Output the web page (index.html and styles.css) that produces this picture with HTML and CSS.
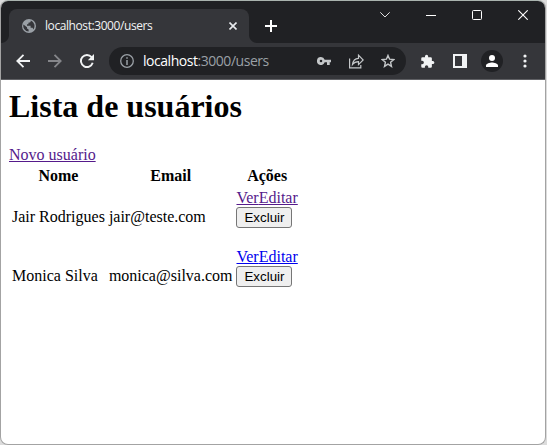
FILE: index.html
```html
<!DOCTYPE html>
<html lang="pt-BR">
<head>
<meta charset="utf-8">
<title>localhost:3000/users</title>
<link rel="stylesheet" href="styles.css">
</head>
<body>
<div class="window">
  <header class="tabstrip">
    <div class="tab">
      <svg class="globe" width="14" height="14" viewBox="0 0 14 14"><circle cx="7" cy="7" r="7" fill="#9aa0a6"/><path d="M1.4 5.6 5 8.2v1.2l1.6 1.2v2A5.8 5.8 0 0 1 1.4 5.6zM8.8 1.6c0 1.6-.6 2-2.4 2.2v1.5H5v1.5h3.6v2h2l.8 1.6A5.8 5.8 0 0 0 8.800 1.600z" fill="#35363a"/></svg>
      <span class="tab-title">localhost:3000/users</span>
      <svg class="tab-close" width="8" height="8" viewBox="0 0 8 8"><path d="M.5.5l7 7M7.500.5l-7 7" stroke="#e8eaed" stroke-width="1.6"/></svg>
    </div>
    <svg class="new-tab" width="12" height="12" viewBox="0 0 12 12"><path d="M6 0v12M0 6h12" stroke="#fff" stroke-width="2"/></svg>
    <div class="controls">
      <svg width="10" height="10" viewBox="0 0 10 10"><path d="M.3 2.300 5 7l4.700-4.700" fill="none" stroke="#e0e0e0"/></svg>
      <svg width="10" height="10" viewBox="0 0 10 10"><path d="M0 5.500h10" stroke="#fff"/></svg>
      <svg width="10" height="10" viewBox="0 0 10 10"><rect x=".5" y=".5" width="9" height="9" rx="1" fill="none" stroke="#fff"/></svg>
      <svg width="10" height="10" viewBox="0 0 10 10"><path d="M.3.3l9.400 9.400M9.700.3.3 9.700" stroke="#fff" stroke-width="1.100"/></svg>
    </div>
  </header>
  <nav class="toolbar">
    <svg class="back" width="14" height="14" viewBox="0 0 14 14"><path d="M14 7H1.500M7.500.8 1.300 7l6.200 6.200" fill="none" stroke="#f1f3f4" stroke-width="1.800"/></svg>
    <svg class="forward" width="14" height="14" viewBox="0 0 14 14"><path d="M0 7h12.500M6.500.8 12.700 7l-6.200 6.200" fill="none" stroke="#85868a" stroke-width="1.800"/></svg>
    <svg class="reload" width="14" height="14" viewBox="0 0 14 14"><path d="M11.600 3.200A6 6 0 1 0 12.700 8.800" fill="none" stroke="#f1f3f4" stroke-width="1.900"/><path d="M14 0v6.200H7.800z" fill="#f1f3f4"/></svg>
    <div class="address">
      <svg width="14" height="14" viewBox="0 0 14 14"><circle cx="7" cy="7" r="6.300" fill="none" stroke="#9aa0a6" stroke-width="1.300"/><path d="M7 3.200v1.600M7 6v5" stroke="#9aa0a6" stroke-width="1.500"/></svg>
      <span class="url"><span class="host">localhost</span>:3000/users</span>
      <svg class="key" width="14" height="8" viewBox="0 0 14 8"><path fill-rule="evenodd" d="M4 0a4 4 0 1 0 3.700 5.300H10V8h2.700V5.300H14V2.700H7.700A4 4 0 0 0 4 0zm0 2.700a1.300 1.300 0 1 1 0 2.600 1.300 1.300 0 0 1 0-2.600z" fill="#c4c7c9"/></svg>
      <svg class="share" width="15" height="15" viewBox="0 0 15 15"><path d="M.6 4.500v9.400h11.200v-3M3.500 10.500C4 6.500 6.500 4.500 9.500 4.300V1.200L14.200 6l-4.700 4.600V7.700C7 7.700 5 8.500 3.500 10.500z" fill="none" stroke="#c4c7c9" stroke-width="1.200"/></svg>
      <svg class="star" width="14" height="14" viewBox="0 0 14 14"><path d="m7 1.400 1.600 3.800 4.100.4-3.100 2.700.9 4.100L7 10.200l-3.500 2.200.9-4.100-3.100-2.700 4.100-.4z" fill="none" stroke="#c4c7c9" stroke-width="1.400"/></svg>
    </div>
    <svg class="puzzle" width="15" height="15" viewBox="0 0 24 24"><path d="M20.500 11H19V7a2 2 0 0 0-2-2h-4V3.500a2.500 2.500 0 0 0-5 0V5H4a2 2 0 0 0-2 2v3.800h1.500a2.700 2.700 0 0 1 0 5.400H2V20a2 2 0 0 0 2 2h3.800v-1.500a2.700 2.700 0 0 1 5.400 0V22H17a2 2 0 0 0 2-2v-4h1.500a2.500 2.500 0 0 0 0-5z" fill="#f1f3f4"/></svg>
    <svg class="panel" width="14" height="14" viewBox="0 0 14 14"><path fill-rule="evenodd" d="M0 0h14v14H0zM2 2v10h7V2z" fill="#f1f3f4"/></svg>
    <svg class="avatar" width="22" height="22" viewBox="0 0 22 22"><circle cx="11" cy="11" r="11" fill="#202124"/><circle cx="11" cy="8" r="3" fill="#fff"/><path d="M5 17v-1.500c0-2 4-3 6-3s6 1 6 3V17z" fill="#fff"/></svg>
    <svg class="menu" width="4" height="14" viewBox="0 0 4 14"><g fill="#f1f3f4"><circle cx="2" cy="2" r="1.600"/><circle cx="2" cy="7" r="1.600"/><circle cx="2" cy="12" r="1.600"/></g></svg>
  </nav>
  <main class="page">
    <h1>Lista de usuários</h1>
    <a class="visited" href="#">Novo usuário</a>
    <table>
      <thead><tr><th>Nome</th><th>Email</th><th>Ações</th></tr></thead>
      <tbody>
        <tr>
          <td>Jair Rodrigues</td><td>jair@teste.com</td>
          <td><a class="visited" href="#">Ver</a><a class="visited" href="#">Editar</a><form><button type="button">Excluir</button></form></td>
        </tr>
        <tr>
          <td>Monica Silva</td><td>monica@silva.com</td>
          <td><a href="#">Ver</a><a href="#">Editar</a><form><button type="button">Excluir</button></form></td>
        </tr>
      </tbody>
    </table>
  </main>
</div>
</body>
</html>
```
FILE: styles.css
```css
* { box-sizing: border-box; }
body { margin: 0; background: #dcdcdc; }
svg { display: block; flex: none; }
.window {
  width: 546px;
  height: 445px;
  border: 1px solid #a3a3a3;
  border-top-color: #a9b3ae;
  border-radius: 8px;
  overflow: hidden;
  background: #fff;
}
.tabstrip {
  height: 42px;
  display: flex;
  background: #202124;
  font-family: "Open Sans", sans-serif;
}
.tab {
  position: relative;
  display: flex;
  align-items: center;
  width: 240px;
  height: 34px;
  margin: 8px 0 0 8px;
  padding: 0 12px 0 13px;
  border-radius: 8px 8px 0 0;
  background: #35363a;
}
/* Curved feet where the tab meets the toolbar */
.tab::before,
.tab::after {
  content: "";
  position: absolute;
  bottom: 0;
  width: 8px;
  height: 8px;
}
.tab::before {
  right: 100%;
  background: radial-gradient(circle at 0 0, transparent 7.5px, #35363a 8.5px);
}
.tab::after {
  left: 100%;
  background: radial-gradient(circle at 100% 0, transparent 7.5px, #35363a 8.5px);
}
.tab-title {
  margin-left: 9px;
  color: #f1f3f4;
  font-size: 12px;
  letter-spacing: -0.42px;
  line-height: 16px;
  white-space: nowrap;
}
.tab-close { margin-left: auto; }
.new-tab { margin: 19px 0 0 16px; }
.controls {
  display: flex;
  gap: 36px;
  margin: 9px 17px 0 auto;
}
.toolbar {
  height: 37px;
  display: flex;
  align-items: center;
  padding-left: 15px;
  border-bottom: 1px solid #5f6064;
  background: #35363a;
}
.forward { margin-left: 18px; }
.reload { margin-left: 18px; }
.address {
  display: flex;
  align-items: center;
  width: 297px;
  height: 28px;
  margin-left: 15px;
  padding: 0 11px;
  border-radius: 14px;
  background: #202124;
}
.url {
  width: 174px;
  margin-left: 9px;
  color: #9aa0a6;
  font: 14px/20px "Open Sans", sans-serif;
  letter-spacing: -0.46px;
  white-space: nowrap;
}
.host { color: #fff; }
.share { margin-left: 18px; }
.star { margin-left: 17px; }
.puzzle { margin-left: 14px; }
.panel { margin-left: 18px; }
.avatar { margin-left: 14px; }
.menu { margin-left: 20px; }
.page {
  padding: 8px;
  color: #000;
  font: 16px/18px "Liberation Serif", "Times New Roman", serif;
}
h1 { margin: 0 0 21px; font-size: 32px; line-height: 37px; }
table { border-spacing: 2px; }
th, td { padding: 1px; }
a { color: #0000ee; }
.visited { color: #551a8b; }
form { margin: 0 0 16px; }
button {
  display: block;
  width: 56px;
  height: 21px;
  padding: 0;
  border: 1px solid #767676;
  border-radius: 3px;
  background: #efefef;
  color: #000;
  font: 13.333px/17px "Liberation Sans", Arial, sans-serif;
}
```
